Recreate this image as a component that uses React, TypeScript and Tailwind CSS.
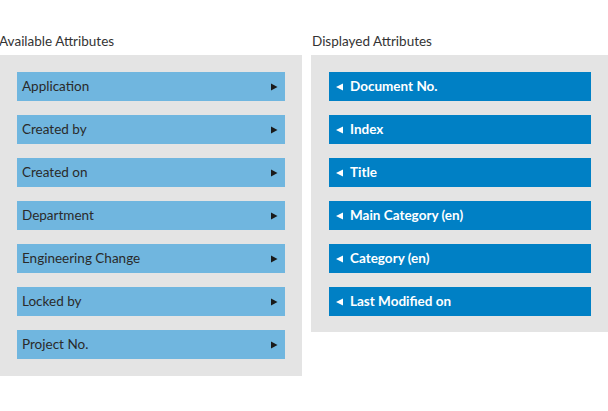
import React from 'react'

const available = ['Application', 'Created by', 'Created on', 'Department', 'Engineering Change', 'Locked by', 'Project No.']
const displayed = ['Document No.', 'Index', 'Title', 'Main Category (en)', 'Category (en)', 'Last Modified on']

const ArrowRight = () => (
    <svg width="7" height="8" viewBox="0 0 7 8" className="shrink-0">
        <polygon points="0,0.5 6.5,4 0,7.5" fill="#1a1a1a" />
    </svg>
)

const ArrowLeft = () => (
    <svg width="7" height="8" viewBox="0 0 7 8" className="shrink-0">
        <polygon points="7,0.5 0,4 7,7.5" fill="#ffffff" />
    </svg>
)

const App = () => {
    return (
        <div className="w-[608px] h-[411px] bg-white flex gap-x-[9px] pt-[33px] overflow-hidden text-[13.5px]" style={{ fontFamily: "Lato, 'Open Sans', sans-serif" }}>
            <div className="flex flex-col w-[302px] shrink-0">
                <div className="h-[22px] leading-[16px] text-[#333333] -ml-px">Available Attributes</div>
                <div className="bg-[#e4e4e4] p-[17px] flex flex-col gap-y-[14px]">
                    {available.map((a) => (
                        <div key={a} className="h-[29px] bg-[#70b6df] flex items-center justify-between pl-[5px] pr-[7px] text-[#2a2a2a]">
                            <span>{a}</span>
                            <ArrowRight />
                        </div>
                    ))}
                </div>
            </div>
            <div className="flex flex-col flex-1">
                <div className="h-[22px] leading-[16px] text-[#333333] pl-px">Displayed Attributes</div>
                <div className="bg-[#e4e4e4] pl-[18px] pr-[17px] pt-[17px] pb-[16px] flex flex-col gap-y-[14px]">
                    {displayed.map((d) => (
                        <div key={d} className="h-[29px] bg-[#0080c5] flex items-center gap-x-[7px] pl-[7px] text-white font-bold">
                            <ArrowLeft />
                            <span>{d}</span>
                        </div>
                    ))}
                </div>
            </div>
        </div>
    )
}

export default App
